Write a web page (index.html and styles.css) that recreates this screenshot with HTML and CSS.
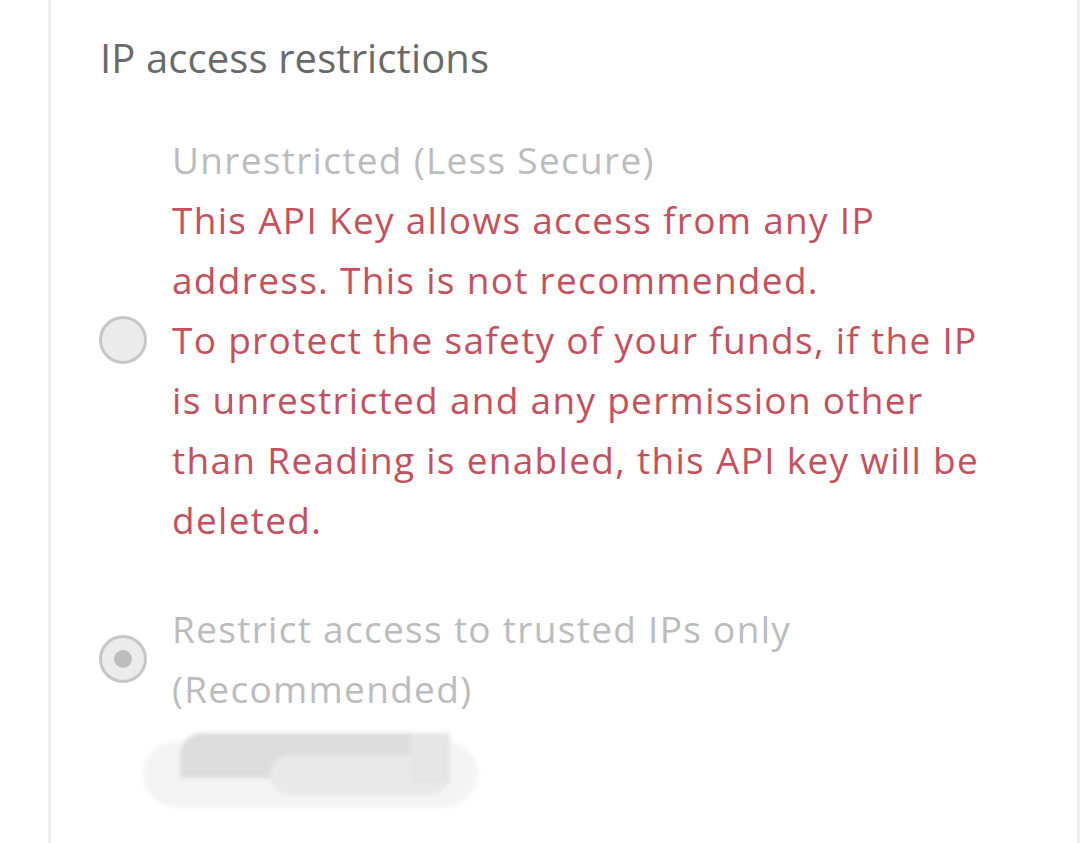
FILE: index.html
```html
<!DOCTYPE html>
<html>
<head>
<meta charset="utf-8">
<link rel="stylesheet" href="styles.css">
</head>
<body>
<div class="card">
  <h2 class="title">IP access restrictions</h2>
  <div class="option">
    <span class="radio"></span>
    <div class="text">
      <div class="label">Unrestricted (Less Secure)</div>
      <div class="warn">This API Key allows access from any IP<br>address. This is not recommended.</div>
      <div class="warn">To protect the safety of your funds, if the IP<br>is unrestricted and any permission other<br>than Reading is enabled, this API key will be<br>deleted.</div>
    </div>
  </div>
  <div class="option second">
    <span class="radio checked"></span>
    <div class="text">
      <div class="label">Restrict access to trusted IPs only<br>(Recommended)</div>
    </div>
  </div>
  <div class="smudge">
    <span class="blob b1"></span>
    <span class="blob b2"></span>
    <span class="blob b3"></span>
    <span class="blob b4"></span>
  </div>
</div>
</body>
</html>
```
FILE: styles.css
```css
html, body {
  margin: 0;
  padding: 0;
  background: #ffffff;
}
body {
  font-family: "Open Sans", "Liberation Sans", sans-serif;
}
.card {
  margin-left: 48px;
  width: 977px;
  min-height: 843px;
  border-left: 3px solid #ececec;
  border-right: 3px solid #ececec;
  padding-left: 49px;
  box-sizing: content-box;
}
.title {
  margin: 0;
  padding-top: 34px;
  font-size: 40px;
  line-height: 48px;
  font-weight: 400;
  letter-spacing: 0.1px;
  color: #6a6a6a;
}
.option {
  display: flex;
  align-items: center;
  gap: 25px;
  margin-top: 48px;
}
.option.second {
  margin-top: 49px;
}
.radio {
  flex: 0 0 auto;
  width: 48px;
  height: 48px;
  box-sizing: border-box;
  border: 3px solid #c6c6c6;
  border-radius: 50%;
  background: #ebebeb;
  display: flex;
  align-items: center;
  justify-content: center;
  margin-left: -1px;
}
.radio.checked::after {
  content: "";
  width: 18px;
  height: 18px;
  border-radius: 50%;
  background: #bdbdbd;
}
.text {
  font-size: 37px;
  line-height: 60px;
  letter-spacing: 1.3px;
  white-space: nowrap;
}
.label {
  color: #bcbcbc;
}
.warn {
  color: #c6505d;
}
.smudge {
  position: relative;
  height: 110px;
  margin-top: 14px;
  width: 400px;
  filter: blur(2px);
}
.blob {
  position: absolute;
  display: block;
}
.b1 {
  left: 43px; top: 8px; width: 335px; height: 66px;
  border-radius: 34px;
  background: #f4f4f4;
}
.b2 {
  left: 80px; top: 0; width: 270px; height: 45px;
  background: #dcdcdc;
  border-radius: 22px 0 0 0;
}
.b3 {
  left: 170px; top: 22px; width: 180px; height: 40px;
  border-radius: 20px;
  background: #e9e9e9;
}
.b4 {
  left: 310px; top: 0; width: 40px; height: 50px;
  background: #e5e5e5;
}
```
